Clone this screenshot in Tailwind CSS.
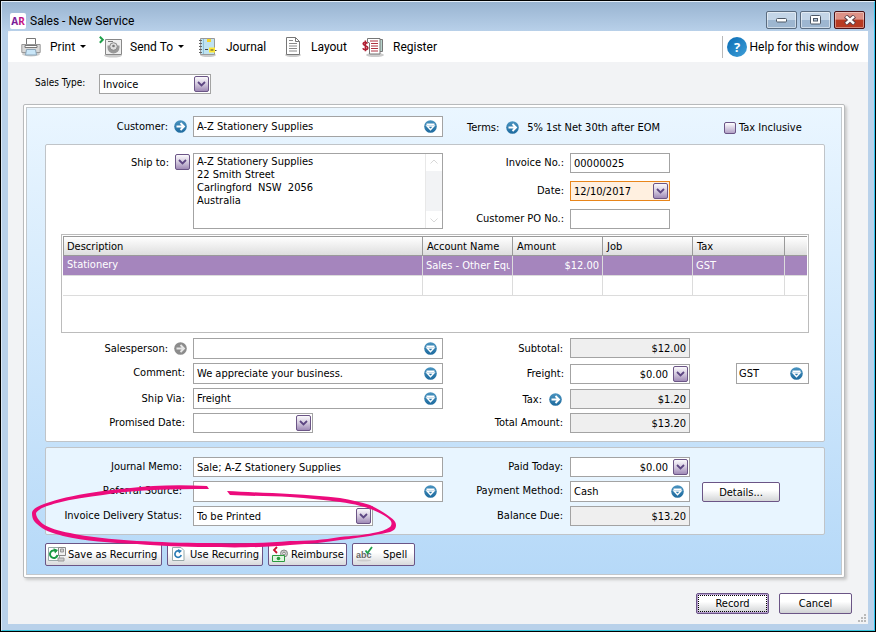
<!DOCTYPE html>
<html lang="en">
<head>
<meta charset="utf-8">
<meta name="viewport" content="width=device-width, initial-scale=1">
<title>Sales - New Service</title>
<script src="https://cdn.jsdelivr.net/npm/@tailwindcss/browser@4"></script>
</head>
<body class="flex min-h-screen flex-col border border-black bg-[#b9d1ea] font-['DejaVu_Sans_Condensed','Noto_Sans',sans-serif] text-[11px] leading-[13px] text-black">

<!-- Shared icons -->
<svg width="0" height="0" class="absolute" aria-hidden="true">
  <defs>
    <linearGradient id="purple" x1="0" y1="0" x2="0" y2="1"><stop offset="0" stop-color="#fdfcfe"/><stop offset=".45" stop-color="#d9d0e2"/><stop offset="1" stop-color="#9c86b4"/></linearGradient>
    <linearGradient id="blue" x1="0" y1="0" x2="0" y2="1"><stop offset="0" stop-color="#4a94c0"/><stop offset="1" stop-color="#1d6a9e"/></linearGradient>
    <linearGradient id="help" x1="0" y1="0" x2="1" y2="1"><stop offset="0" stop-color="#0a6cb4"/><stop offset="1" stop-color="#3f9fd8"/></linearGradient>
    <linearGradient id="brand" x1="0" y1="0" x2="1" y2="0"><stop offset="0" stop-color="#5a1da0"/><stop offset="1" stop-color="#e0107c"/></linearGradient>
  </defs>
  <symbol id="drop" viewBox="0 0 15 16"><rect x=".5" y=".5" width="14" height="15" rx="1.5" fill="url(#purple)" stroke="#6b5586"/><path d="M4 6l3.500 3.500L11 6" fill="none" stroke="#5d4682" stroke-width="1.800"/></symbol>
  <symbol id="pick" viewBox="0 0 13 13"><circle cx="6.500" cy="6.500" r="6.300" fill="url(#blue)"/><path d="M2.500 3.500h8V5h-8z" fill="#fff"/><path d="M3 6h7L6.500 9.800z" fill="#2c7aac" stroke="#fff" stroke-width="1.400"/></symbol>
  <symbol id="go" viewBox="0 0 13 13"><circle cx="6.500" cy="6.500" r="6.300" fill="url(#blue)"/><path d="M2.500 6.500h7M6.500 3l3.500 3.500L6.500 10" fill="none" stroke="#fff" stroke-width="1.900"/></symbol>
  <symbol id="gooff" viewBox="0 0 13 13"><circle cx="6.500" cy="6.500" r="6.300" fill="#8c8c8c"/><path d="M2.500 6.500h7M6.500 3l3.500 3.500L6.500 10" fill="none" stroke="#e6e6e6" stroke-width="1.900"/></symbol>
</svg>

<div class="flex flex-1 flex-col border border-t-[#e4eef8] border-r-[#2fc4ee] border-b-[#35c3da] border-l-[#dce9f6] bg-linear-to-b from-[#99b4d1] to-[#b9d1ea] to-[30px]">

<header class="flex h-[29px] items-center pr-[9px] pl-2 font-[Roboto,'Noto_Sans',sans-serif] text-xs">
  <svg class="mt-2 h-4 w-4" viewBox="0 0 16 16" aria-hidden="true"><rect width="16" height="16" rx="2" fill="#fff"/><text x="8" y="12" text-anchor="middle" font-family="Noto Sans" font-size="10" font-weight="700" fill="url(#brand)">AR</text></svg>
  <h1 class="mt-2 ml-1">Sales - New Service</h1>
  <div class="mt-1.5 ml-auto flex gap-[3px]">
    <button aria-label="Minimize" class="flex h-[18px] w-[31px] items-center justify-center rounded-xs border border-[#5a6c80] bg-linear-to-b from-[#c3d5e7] from-50% to-[#9db6d0] to-50% inset-ring inset-ring-white/50"><svg width="13" height="6" viewBox="0 0 13 6"><rect x="1.500" y="1.500" width="10" height="3.500" rx="1" fill="#fff" stroke="#4d5866"/></svg></button>
    <button aria-label="Maximize" class="flex h-[18px] w-[31px] items-center justify-center rounded-xs border border-[#5a6c80] bg-linear-to-b from-[#c3d5e7] from-50% to-[#9db6d0] to-50% inset-ring inset-ring-white/50"><svg width="11" height="10" viewBox="0 0 11 10"><rect x=".5" y=".5" width="10" height="8.500" rx="1" fill="#fff" stroke="#4d5866"/><rect x="3.500" y="3.500" width="4" height="2.500" fill="#b5c8dc" stroke="#4d5866"/></svg></button>
    <button aria-label="Close" class="flex h-[18px] w-[31px] items-center justify-center rounded-xs border border-[#4a1218] bg-linear-to-b from-[#dd9186] from-45% to-[#b83a22] to-50% inset-ring inset-ring-white/40"><svg width="12" height="10" viewBox="0 0 12 10"><path d="M1.500 1l9 8M10.500 1l-9 8" stroke="#5c4048" stroke-width="4.400"/><path d="M2 1.400l8 7.200M10 1.400l-8 7.200" stroke="#fff" stroke-width="2.600"/></svg></button>
  </div>
</header>

<main class="mx-1.5 mb-1.5 flex flex-1 flex-col bg-[#f2f3f5]">

  <nav class="flex h-[31px] items-center rounded-tl bg-white pr-[9px] pl-[13px] font-[Roboto,'Noto_Sans',sans-serif] text-xs">
    <button class="flex w-[78px] items-center gap-[9px]">
      <svg width="20" height="20" viewBox="0 0 20 20"><ellipse cx="10" cy="17" rx="9" ry="2.500" fill="#ccc"/><path d="M5.500 7V1.500h9V7" fill="#fff" stroke="#777"/><path d="M.8 7.500h18.400v8H.8z" fill="#d9d9d9" stroke="#999"/><path d="M4 8.500h12v2H4z" fill="#fff" stroke="#777"/><path d="M5.500 12.500h9l1 5.500h-11z" fill="#c9e6f8" stroke="#8ba5b8"/></svg>
      <span class="flex items-center gap-[5px]">Print <svg width="6" height="3" viewBox="0 0 6 3"><path d="M0 0h6L3 3z"/></svg></span>
    </button>
    <button class="flex w-[99px] items-center gap-2">
      <svg width="23" height="22" viewBox="0 0 23 22"><ellipse cx="14" cy="19.500" rx="9" ry="2" fill="#ccc"/><path d="M6.500 3.500h16v15h-16z" fill="#eee" stroke="#888"/><path d="M9 5.500h5" stroke="#777"/><path d="M8.500 9.500h12v2a6 6 0 0 1-12 0z" fill="#999"/><circle cx="14.500" cy="10.500" r="3.800" fill="#ddd" stroke="#888"/><circle cx="14.500" cy="10" r="1.300" fill="#777"/><path d="M.8.800l3 3-3 3" fill="none" stroke="#1fa04a" stroke-width="2"/></svg>
      <span class="flex items-center gap-[5px]">Send To <svg width="6" height="3" viewBox="0 0 6 3"><path d="M0 0h6L3 3z"/></svg></span>
    </button>
    <button class="flex w-[87px] items-center gap-[9px]">
      <svg width="19" height="20" viewBox="0 0 19 20"><ellipse cx="10" cy="18" rx="8" ry="2" fill="#ccc"/><path d="M2.500 1.500h14v16h-14z" fill="#bfe3f1" stroke="#999"/><path d="M5.500 2v15" stroke="#8fc0d8"/><path d="M1 3.500h3M1 6.500h3M1 9.500h3M1 12.500h3M1 15.500h3" stroke="#666"/><path d="M9 2h4v3H9z" fill="#f5d327"/><path d="M11 10.500h6v5h-6z" fill="#ffe934"/><path d="M7 12.500h3M12.500 13h3M17 13.500h1.500" stroke="#444"/></svg>
      Journal
    </button>
    <button class="flex w-[77px] items-center gap-2.5">
      <svg width="16" height="20" viewBox="0 0 16 20"><ellipse cx="8" cy="18" rx="8" ry="2" fill="#ccc"/><path d="M1.500.500h9l4 4v13h-13z" fill="#fff" stroke="#777"/><path d="M10.500.500v4h4" fill="none" stroke="#777"/><path d="M4 3.500h4M4 6.500h8M4 9h8M4 11.500h8M4 14h8" stroke="#8a8a8a"/></svg>
      Layout
    </button>
    <button class="flex items-center gap-2">
      <svg width="23" height="20" viewBox="0 0 23 20"><ellipse cx="13" cy="18" rx="9" ry="2" fill="#ccc"/><path d="M13 2.500h7.500v12H13z" fill="#b8d4cc" stroke="#777"/><path d="M5.500 1.500h12.500v15.500H7.500V6l-2-1z" fill="#fff" stroke="#777"/><path d="M8 4h8M9 6.500h7M9 9h7M9 11.500h7M9 14h7" stroke="#b03040"/><path d="M5.500 6.500C4.500 4.800 1 5 1.200 7s4.600 1.400 4.600 3.800S1.500 13 .800 11.200M3.400 3.500v10.800" fill="none" stroke="#b01f33" stroke-width="1.600"/></svg>
      Register
    </button>
    <a href="#help" class="ml-auto flex h-[22px] items-center gap-[3px] border-l border-[#b9b9b9] pl-1">
      <svg width="20" height="20" viewBox="0 0 20 20" aria-hidden="true"><circle cx="10" cy="10" r="10" fill="url(#help)"/><text x="10" y="14.500" text-anchor="middle" font-family="Open Sans" font-size="13" font-weight="700" fill="#fff">?</text></svg>
      Help for this window
    </a>
  </nav>

  <div class="flex items-start pt-3 pl-[27px]">
    <label for="saletype" class="w-16 pt-0.5 text-[10px]">Sales Type:</label>
    <div class="flex h-5 w-28 items-center border border-[#a3a3a3] bg-white pr-px pl-[3px]">
      <select id="saletype" class="min-w-0 flex-1 appearance-none outline-none"><option>Invoice</option></select>
      <svg width="15" height="16" class="shrink-0"><use href="#drop"/></svg>
    </div>
  </div>

  <form class="mt-2.5 mr-[23px] ml-[15px] rounded-xs border border-[#b8babc] bg-white p-0.5 shadow-[2px_2px_3px_#c8c8c8]">
  <div class="border border-[#c3c8cc] bg-linear-to-b from-[#eaf6ff] to-[#b6d9f8] pt-2 pr-4 pb-2 pl-[18px]">

    <div class="grid grid-cols-[147px_minmax(0,250fr)_127px_minmax(0,120fr)_minmax(0,134fr)] border-x border-transparent pb-[7px]">
      <div class="flex items-center justify-end gap-1.5 pr-1.5">
        <label for="customer">Customer:</label>
        <button type="button" aria-label="Open customer"><svg width="13" height="13" class="block"><use href="#go"/></svg></button>
      </div>
      <div class="flex h-[21px] items-center border border-[#a3a3a3] bg-white pr-[5px] pl-[3px]">
        <input id="customer" value="A-Z Stationery Supplies" class="min-w-0 flex-1 outline-none">
        <button type="button" aria-label="Choose customer"><svg width="13" height="13" class="block"><use href="#pick"/></svg></button>
      </div>
      <div class="col-span-2 flex items-center gap-[7px] pt-0.5 pl-6">
        <span>Terms:</span>
        <button type="button" aria-label="Edit terms"><svg width="13" height="13" class="block"><use href="#go"/></svg></button>
        <span class="ml-px whitespace-nowrap">5% 1st Net 30th after EOM</span>
      </div>
      <label class="flex items-center gap-[3px] pt-0.5 pl-[34px] whitespace-nowrap"><input type="checkbox" class="h-3 w-3 shrink-0 appearance-none rounded-xs border border-[#6b5586] bg-linear-to-b from-white to-[#b3a2c6]">Tax Inclusive</label>
    </div>

    <section class="rounded-xs border border-[#c0c4c8] bg-white py-2">
      <div class="grid grid-cols-[147px_minmax(0,250fr)_127px_minmax(0,120fr)_minmax(0,134fr)]">
        <div class="flex items-start justify-end gap-1.5 pt-px pr-[3px]">
          <label for="shipto" class="pt-0.5">Ship to:</label>
          <button type="button" aria-label="Choose address"><svg width="15" height="16" class="block"><use href="#drop"/></svg></button>
        </div>
        <div class="flex border border-[#a3a3a3] bg-white">
          <textarea id="shipto" class="min-w-0 flex-1 resize-none overflow-hidden pt-px pl-[3px] outline-none">A-Z Stationery Supplies
22 Smith Street
Carlingford  NSW  2056
Australia</textarea>
          <div class="flex w-[17px] flex-col justify-between border-l border-[#e8e8e8] bg-[#f2f3f5]" aria-hidden="true">
            <svg width="16" height="17" viewBox="0 0 16 17" class="bg-white"><path d="M4.500 9.500L8 6l3.500 3.500" fill="none" stroke="#d8d8d8"/></svg>
            <svg width="16" height="17" viewBox="0 0 16 17" class="bg-white"><path d="M4.500 7.500L8 11l3.500-3.500" fill="none" stroke="#d8d8d8"/></svg>
          </div>
        </div>
        <div class="flex flex-col gap-2 pr-1.5 text-right leading-5">
          <label for="invno">Invoice No.:</label>
          <label for="date">Date:</label>
          <label for="po">Customer PO No.:</label>
        </div>
        <div class="flex flex-col gap-2 pr-5">
          <input id="invno" value="00000025" class="h-5 w-full border border-[#a3a3a3] bg-white px-[3px] outline-none">
          <div class="flex h-5 items-center border border-[#e8851a] bg-[#fff0e0] pr-px pl-[3px]">
            <input id="date" value="12/10/2017" class="min-w-0 flex-1 outline-none">
            <button type="button" aria-label="Pick date"><svg width="15" height="16" class="block"><use href="#drop"/></svg></button>
          </div>
          <input id="po" class="h-5 w-full border border-[#a3a3a3] bg-white px-[3px] outline-none">
        </div>
      </div>

      <div class="mx-[15px] mt-[5px] mb-[5px] h-[99px] border border-[#bcbcbc] bg-white p-px">
        <table class="w-full table-fixed border-separate border-spacing-0">
          <colgroup><col><col class="w-[90px]"><col class="w-[90px]"><col class="w-[90px]"><col class="w-[92px]"><col class="w-[23px]"></colgroup>
          <thead>
            <tr class="h-5 text-left">
              <th class="border-y border-l border-[#9a9a9a] bg-linear-to-b from-white to-[#dedede] p-0 pl-[3px] font-normal">Description</th>
              <th class="border-y border-l border-[#9a9a9a] bg-linear-to-b from-white to-[#dedede] p-0 pl-1 font-normal">Account Name</th>
              <th class="border-y border-l border-[#9a9a9a] bg-linear-to-b from-white to-[#dedede] p-0 pl-1 font-normal">Amount</th>
              <th class="border-y border-l border-[#9a9a9a] bg-linear-to-b from-white to-[#dedede] p-0 pl-1 font-normal">Job</th>
              <th class="border-y border-l border-[#9a9a9a] bg-linear-to-b from-white to-[#dedede] p-0 pl-1 font-normal">Tax</th>
              <th class="border-y border-l border-[#9a9a9a] bg-linear-to-b from-white to-[#dedede] p-0" aria-label="Options"></th>
            </tr>
          </thead>
          <tbody>
            <tr class="h-5 bg-[#a585bd] text-white">
              <td class="border-b border-[#dcdcdc] p-0 pb-0.5 pl-1">Stationery</td>
              <td class="overflow-hidden border-b border-l border-[#dcdcdc] p-0 pr-0.5 pl-[3px] whitespace-nowrap"><div class="overflow-hidden">Sales - Other Equipment</div></td>
              <td class="border-b border-l border-[#dcdcdc] p-0 pr-[3px] text-right">$12.00</td>
              <td class="border-b border-l border-[#dcdcdc] p-0"></td>
              <td class="border-b border-l border-[#dcdcdc] p-0 pl-[3px]">GST</td>
              <td class="border-b border-l border-[#dcdcdc] p-0"></td>
            </tr>
            <tr class="h-5">
              <td class="border-b border-[#dcdcdc] p-0"></td>
              <td class="border-b border-l border-[#dcdcdc] p-0"></td>
              <td class="border-b border-l border-[#dcdcdc] p-0"></td>
              <td class="border-b border-l border-[#dcdcdc] p-0"></td>
              <td class="border-b border-l border-[#dcdcdc] p-0"></td>
              <td class="border-b border-l border-[#dcdcdc] p-0"></td>
            </tr>
          </tbody>
        </table>
      </div>

      <div class="grid grid-cols-[147px_minmax(0,250fr)_127px_minmax(0,120fr)_minmax(0,134fr)] items-start gap-y-1">
        <div class="flex h-5 items-center justify-end gap-1.5 pr-1.5">
          <label for="seller">Salesperson:</label>
          <button type="button" disabled aria-label="Open salesperson"><svg width="13" height="13" class="block"><use href="#gooff"/></svg></button>
        </div>
        <div class="flex h-[21px] items-center border border-[#a3a3a3] bg-white pr-[5px] pl-[3px]">
          <input id="seller" class="min-w-0 flex-1 outline-none">
          <button type="button" aria-label="Choose salesperson"><svg width="13" height="13" class="block"><use href="#pick"/></svg></button>
        </div>
        <label for="subtotal" class="pr-[7px] text-right leading-[21px]">Subtotal:</label>
        <input id="subtotal" readonly value="$12.00" class="h-5 w-full border border-[#a3a3a3] bg-[#efefef] px-[3px] text-right outline-none">
        <div></div>

        <label for="comment" class="pr-2 text-right leading-5">Comment:</label>
        <div class="flex h-[21px] items-center border border-[#a3a3a3] bg-white pr-[5px] pl-[3px]">
          <input id="comment" value="We appreciate your business." class="min-w-0 flex-1 outline-none">
          <button type="button" aria-label="Choose comment"><svg width="13" height="13" class="block"><use href="#pick"/></svg></button>
        </div>
        <label for="freight" class="pr-1.5 text-right leading-[21px]">Freight:</label>
        <div class="mt-px flex h-5 items-center border border-[#a3a3a3] bg-white pr-px pl-[3px]">
          <input id="freight" value="$0.00" class="mr-[5px] min-w-0 flex-1 text-right outline-none">
          <button type="button" aria-label="Calculator"><svg width="15" height="16" class="block"><use href="#drop"/></svg></button>
        </div>
        <div class="mr-[15px] ml-[46px] flex h-[21px] items-center border border-[#a3a3a3] bg-white pr-[5px] pl-0.5">
          <input aria-label="Freight tax code" value="GST" class="min-w-0 flex-1 outline-none">
          <button type="button" aria-label="Choose tax code"><svg width="13" height="13" class="block"><use href="#pick"/></svg></button>
        </div>

        <label for="shipvia" class="pr-2 text-right leading-[21px]">Ship Via:</label>
        <div class="flex h-[21px] items-center border border-[#a3a3a3] bg-white pr-[5px] pl-[3px]">
          <input id="shipvia" value="Freight" class="min-w-0 flex-1 outline-none">
          <button type="button" aria-label="Choose shipping method"><svg width="13" height="13" class="block"><use href="#pick"/></svg></button>
        </div>
        <div class="mt-px flex h-5 items-center justify-end gap-[7px] pr-2">
          <label for="tax">Tax:</label>
          <button type="button" aria-label="Tax details"><svg width="13" height="13" class="block"><use href="#go"/></svg></button>
        </div>
        <input id="tax" readonly value="$1.20" class="mt-px h-5 w-full border border-[#a3a3a3] bg-[#efefef] px-[3px] text-right outline-none">
        <div></div>

        <label for="promised" class="pr-2 text-right leading-5">Promised Date:</label>
        <div class="mr-[130px] flex h-5 items-center border border-[#a3a3a3] bg-white pr-px pl-[3px]">
          <input id="promised" class="min-w-0 flex-1 outline-none">
          <button type="button" aria-label="Pick promised date"><svg width="15" height="16" class="block"><use href="#drop"/></svg></button>
        </div>
        <label for="total" class="pr-[7px] text-right leading-5">Total Amount:</label>
        <input id="total" readonly value="$13.20" class="h-5 w-full border border-[#a3a3a3] bg-[#efefef] px-[3px] text-right outline-none">
      </div>
    </section>

    <section class="relative mt-[5px] rounded-xs border border-[#c0c4c8] bg-[#e8f5ff] pt-[9px] pb-2">
      <div class="grid grid-cols-[147px_minmax(0,250fr)_127px_minmax(0,120fr)_minmax(0,134fr)] items-start gap-y-1">
        <label for="memo" class="pr-[11px] text-right leading-5">Journal Memo:</label>
        <input id="memo" value="Sale; A-Z Stationery Supplies" class="h-5 w-full border border-[#a3a3a3] bg-white px-[3px] outline-none">
        <label for="paid" class="pr-[7px] text-right leading-5">Paid Today:</label>
        <div class="flex h-5 items-center border border-[#a3a3a3] bg-white pr-px pl-[3px]">
          <input id="paid" value="$0.00" class="mr-[5px] min-w-0 flex-1 text-right outline-none">
          <button type="button" aria-label="Calculator"><svg width="15" height="16" class="block"><use href="#drop"/></svg></button>
        </div>
        <div></div>

        <label for="source" class="pr-[11px] text-right leading-5">Referral Source:</label>
        <div class="flex h-[21px] items-center border border-[#a3a3a3] bg-white pr-[5px] pl-[3px]">
          <input id="source" class="min-w-0 flex-1 outline-none">
          <button type="button" aria-label="Choose source"><svg width="13" height="13" class="block"><use href="#pick"/></svg></button>
        </div>
        <label for="method" class="pr-[7px] text-right leading-5">Payment Method:</label>
        <div class="flex h-[21px] items-center border border-[#a3a3a3] bg-white pr-[5px] pl-[3px]">
          <input id="method" value="Cash" class="min-w-0 flex-1 outline-none">
          <button type="button" aria-label="Choose method"><svg width="13" height="13" class="block"><use href="#pick"/></svg></button>
        </div>
        <button type="button" class="mt-px ml-3 h-5 w-[78px] rounded-xs border border-[#6b5586] bg-linear-to-b from-white from-40% to-[#d4d6d8]">Details...</button>

        <label for="delivery" class="pr-[11px] text-right leading-5">Invoice Delivery Status:</label>
        <div class="mr-[70px] flex h-5 items-center border border-[#a3a3a3] bg-white pr-px pl-[3px]">
          <select id="delivery" class="min-w-0 flex-1 appearance-none outline-none"><option>To be Printed</option></select>
          <svg width="15" height="16" class="shrink-0"><use href="#drop"/></svg>
        </div>
        <label for="balance" class="pr-[7px] text-right leading-5">Balance Due:</label>
        <input id="balance" readonly value="$13.20" class="h-5 w-full border border-[#a3a3a3] bg-[#efefef] px-[3px] text-right outline-none">
      </div>
      <!-- Hand-drawn highlight round the delivery status -->
      <svg class="pointer-events-none absolute top-9 -left-4 z-10" width="370" height="66" viewBox="0 0 370 66" aria-hidden="true"><path d="M177 2C158 1 140 1 123 2C106 3 90 5 73 7C50 10 32 14 20 18C8 22 2 25 2 29C2 33 3 37 7 40C13 46 22 49 33 52C55 57 80 59 107 60C130 62 155 63 177 63C215 64 240 63 260 61C280 60 297 58 310 56C335 53 352 50 360 48C365 46 366 44 366 41C366 38 364 36 360 33C355 29 348 25 340 21C331 18 321 16 310 14C295 12 278 11 260 10C240 9 215 8 197 7L200 11C220 12 242 12 260 13C278 14 295 16 310 18C325 20 336 23 343 26C351 29 357 33 360 36C362 38 362 41 360 43C356 46 350 48 343 49C334 51 322 52 310 53C293 56 278 57 260 57C235 59 205 60 177 59C150 59 130 58 107 57C80 55 58 53 40 49C28 47 19 44 13 40C8 36 6 32 6 29C8 25 16 22 27 19C42 15 58 13 73 11C90 8 106 7 123 6C142 5 160 5 179 5z" fill="#ec0b7c"/></svg>
    </section>

    <div class="mt-2 flex gap-[5px]">
      <button type="button" class="flex h-[23px] w-[117px] items-center gap-0.5 rounded-xs border border-[#6b5586] bg-linear-to-b from-white from-40% to-[#d8dadc] pl-0.5 whitespace-nowrap">
        <svg width="18" height="17" viewBox="0 0 18 17" class="shrink-0"><path d="M.500 1.500h11v13H.500z" fill="#fff" stroke="#9aa"/><path d="M10.500 1.500h7v8h-7z" fill="#f2f2f2" stroke="#888"/><path d="M12.500 3h3v3h-3zM10 12h6v3h-6z" fill="#ccc" stroke="#999"/><path d="M8.500 5.500A3.800 3.800 0 1 0 9.500 9" fill="none" stroke="#1a9a44" stroke-width="2"/><path d="M5.500 2.200L10 4 7 7.500z" fill="#1a9a44"/></svg>
        Save as Recurring</button>
      <button type="button" class="flex h-[23px] w-24 items-center gap-[5px] rounded-xs border border-[#6b5586] bg-linear-to-b from-white from-40% to-[#d8dadc] pl-1 whitespace-nowrap">
        <svg width="13" height="17" viewBox="0 0 13 17" class="shrink-0"><path d="M.500 1.500h8.500l3 3v10H.500z" fill="#fff" stroke="#9aa"/><path d="M8.300 5.800A3.200 3.200 0 1 0 9.200 9" fill="none" stroke="#2b7cb5" stroke-width="1.700"/><path d="M5.800 3L10 4.800 7 7.500z" fill="#2b7cb5"/></svg>
        Use Recurring</button>
      <button type="button" class="flex h-[23px] w-[79px] items-center gap-0.5 rounded-xs border border-[#6b5586] bg-linear-to-b from-white from-40% to-[#d8dadc] pl-[3px] whitespace-nowrap">
        <svg width="17" height="18" viewBox="0 0 17 18" class="shrink-0"><path d="M5 1L2 4l3 3" fill="none" stroke="#c8102e" stroke-width="1.800"/><circle cx="12" cy="7.500" r="3.500" fill="#ccc" stroke="#888"/><circle cx="12" cy="7.500" r="1.300" fill="#fff" stroke="#888"/><path d="M.500 9.500h12v6H.500z" fill="#dff5df" stroke="#2c9a3e"/><circle cx="6.500" cy="12.500" r="1.800" fill="#2c9a3e"/></svg>
        Reimburse</button>
      <button type="button" class="flex h-[23px] w-[63px] items-center gap-2.5 rounded-xs border border-[#6b5586] bg-linear-to-b from-white from-40% to-[#d8dadc] pl-[3px] whitespace-nowrap">
        <svg width="17" height="17" viewBox="0 0 17 17" class="shrink-0"><ellipse cx="8" cy="14.500" rx="7" ry="1" fill="#ccc"/><text x="0" y="12" font-family="Liberation Sans" font-size="9" font-weight="700" fill="#666">abc</text><path d="M9.500 4.500l2 2.500L16 1" fill="none" stroke="#1fa04a" stroke-width="1.800"/></svg>
        Spell</button>
    </div>
  </div>
  </form>

  <footer class="relative mt-auto flex justify-end gap-2.5 pt-[15px] pr-4 pb-2.5">
    <button type="button" class="h-[21px] w-[73px] rounded-xs border border-[#6b5586] bg-linear-to-b from-white from-40% to-[#d0d2d4] p-px inset-ring inset-ring-[#b79fd0]"><span class="block border border-dotted border-black leading-[15px]">Record</span></button>
    <button type="button" class="h-[21px] w-[73px] rounded-xs border border-[#6b5586] bg-linear-to-b from-white from-40% to-[#d0d2d4]">Cancel</button>
    <svg class="absolute right-0.5 bottom-0.5" width="8" height="8" viewBox="0 0 8 8" fill="#b9b9b9" aria-hidden="true"><path d="M6 0h2v2H6zM3 3h2v2H3zM6 3h2v2H6zM0 6h2v2H0zM3 6h2v2H3zM6 6h2v2H6z"/></svg>
  </footer>
</main>
</div>
</body>
</html>
